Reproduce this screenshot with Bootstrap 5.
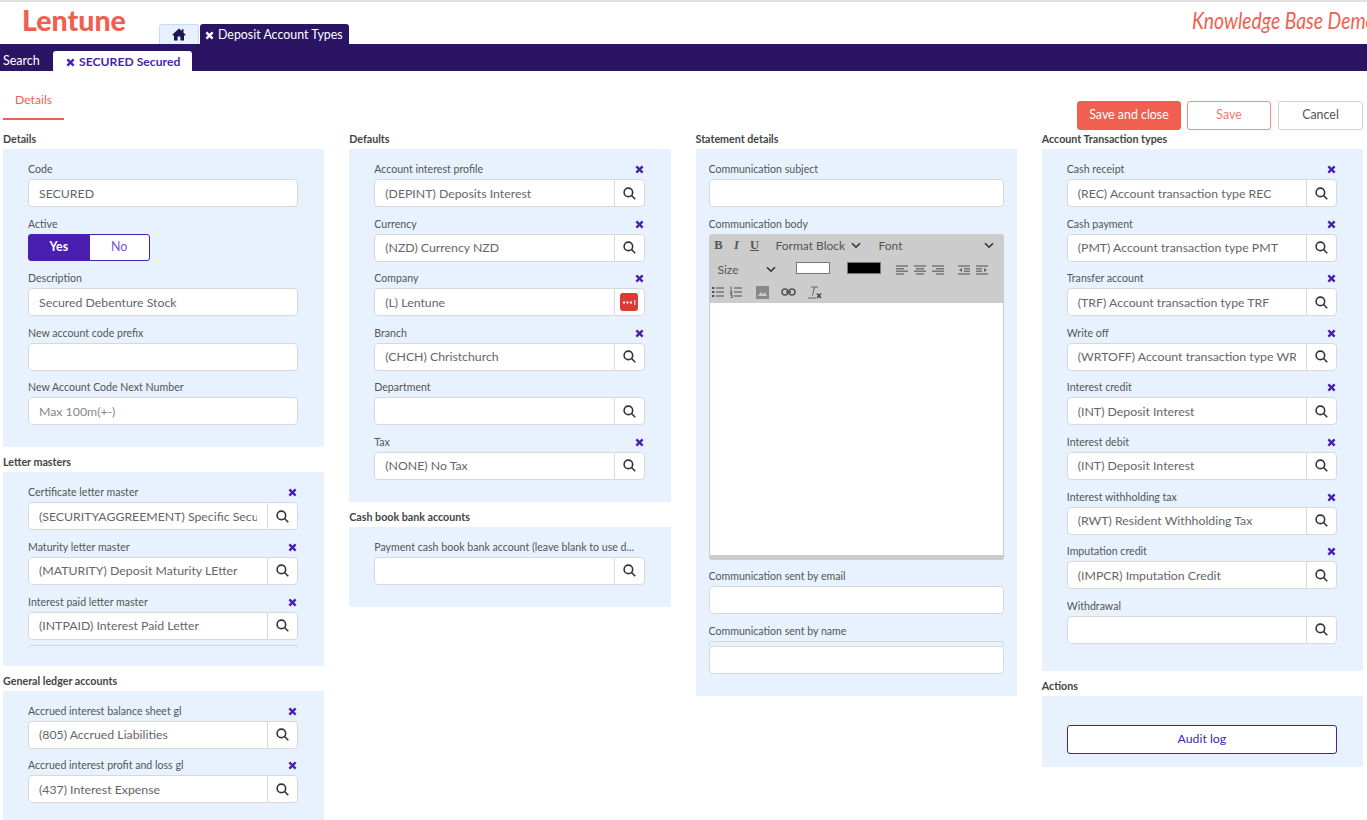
<!DOCTYPE html>
<html lang="en">
<head>
    <meta charset="utf-8">
    <title>Deposit Account Types</title>
    <link href="https://cdn.jsdelivr.net/npm/bootstrap@5.3.3/dist/css/bootstrap.min.css" rel="stylesheet">
    <script src="https://cdn.jsdelivr.net/npm/bootstrap@5.3.3/dist/js/bootstrap.bundle.min.js"></script>
    <style>
        html, body { height: 820px; overflow: hidden; }
        body { font-family: "Lato", "Noto Sans", sans-serif; font-size: 12.3px; color: #555; background: #fff; }

        /* header */
        .top-head { height: 44px; border-top: 2px solid #e2e2e2; position: relative; overflow: hidden; }
        .logo-text { font-family: "Lato", sans-serif; font-weight: 900; font-size: 28.5px; line-height: 1; color: #f15f50; margin-left: 22px; margin-top: 4px; width: 137px; }
        .head-tab { height: 20px; margin-top: 22px; border-radius: 3px 3px 0 0; }
        .home-tab { width: 40px; background: #e6f1fd; border: 1px solid #c4dcf7; border-bottom: 0; }
        .dep-tab { width: 149px; margin-left: 1px; background: #2b1463; color: #fff; padding-left: 5px; font-size: 12.4px; line-height: 21px; white-space: nowrap; }
        .dep-tab .fld-x { margin-right: 4px; }
        .kb-text { position: absolute; left: 1192px; top: 1px; white-space: nowrap; font-family: "Lato", sans-serif; font-style: italic; font-size: 23px; line-height: 34px; color: #f15f50; transform: scaleX(.84); transform-origin: left center; }
        .sub-bar { height: 27px; background: #2b1463; color: #fff; }
        .sub-search { padding-left: 3px; width: 53px; font-size: 12.5px; line-height: 34px; }
        .sub-tab { width: 139px; height: 20px; margin-top: 7px; background: #fff; color: #4a1fb0; font-weight: 700; border-radius: 3px 3px 0 0; padding-left: 13px; line-height: 21px; font-size: 12.2px; white-space: nowrap; }

        /* details tab + actions */
        .tab-row { height: 61px; padding: 0 4px 0 3px; }
        .det-tab { width: 61px; height: 35px; margin-top: 14px; padding-left: 12px; line-height: 30px; color: #f15f50; font-size: 12.2px; border-bottom: 2px solid #f15f50; }
        .act-btn { height: 29px; padding: 0; font-size: 12.4px; border-radius: 3px; margin-top: 30px; }
        .btn-coral { width: 104px; background: #f15f50; border: 1px solid #f15f50; color: #fff; }
        .btn-coral-line { width: 84px; margin-left: 6px; background: #fff; border: 1px solid #f78d82; color: #f57a6d; }
        .btn-plain-line { width: 85px; margin-left: 7px; background: #fff; border: 1px solid #d5d5d5; color: #555; }

        /* columns */
        .form-cols { display: grid; grid-template-columns: repeat(4, minmax(0, 1fr)); column-gap: 25px; padding: 0 4px 0 3px; align-items: start; }
        .sec-title { font-size: 10.7px; font-weight: 700; color: #444; line-height: 14px; margin: 0; height: 17px; white-space: nowrap; }
        .sec-panel { background: #e7f2fe; padding: 12px 26px 13px 25px; margin-bottom: 8px; }
        .pad-b18 { padding-bottom: 18px; }
        .pad-b22 { padding-bottom: 22px; }
        .pad-b27 { padding-bottom: 27px; }
        .pad-x13 { padding-left: 13px; padding-right: 13px; }
        .pad-t29 { padding-top: 29px; }
        .fld { margin-bottom: 8.6px; }
        .fld:last-child { margin-bottom: 0; }
        .fld-label { font-size: 10.6px; line-height: 16px; height: 18px; color: #555; white-space: nowrap; overflow: hidden; }
        .fld-label.d-flex { align-items: flex-start !important; }
        .fld-label .fld-x { margin-top: 4px; }
        .fld-x { width: 9px; height: 9px; margin-right: 1px; fill: none; stroke: #4a1fb0; stroke-width: 2.6; }
        .fld-x-white { stroke: #fff; }
        .fld .form-control { height: 28px; min-height: 0; padding: 0 10px; font-size: 12.3px; color: #666; border: 1px solid #d8d8d8; border-radius: 4px; box-shadow: none; background: #fff; }
        .fld .input-group .form-control { border-radius: 4px 0 0 4px; }
        .fld .form-control::placeholder { color: #888; }
        .srch-btn { width: 31px; padding: 0; background: #fff; border: 1px solid #d8d8d8; border-radius: 0 4px 4px 0; display: flex; align-items: center; justify-content: center; }
        .srch-ico { width: 13px; height: 13px; fill: none; stroke: #333; stroke-width: 1.7; }
        .dots-ico { width: 18px; height: 18px; background: #dc3b35; border-radius: 3px; color: #fff; display: flex; align-items: center; justify-content: center; }
        .tog-wrap { width: 122px; height: 27px; margin-bottom: 1px; }
        .tog-wrap .btn { width: 50%; padding: 0; font-size: 12.4px; border: 1px solid #4a1fb0; border-radius: 3px; font-weight: 700; }
        .tog-on { background: #4a1fb0; color: #fff; }
        .tog-wrap .tog-off { background: #fff; color: #7a4fd6; font-weight: 400; }
        .clip-line { height: 3px; margin-top: 5px; border: 1px solid #d8d8d8; border-bottom: 0; border-radius: 3px 3px 0 0; }
        .clip-line-inp { height: 5px; border: 1px solid #d8d8d8; border-bottom: 0; border-radius: 3px 3px 0 0; }

        /* editor */
        .ed-box { height: 326px; background: #ccc; border-radius: 3px; padding: 0 1px 5px; display: flex; flex-direction: column; margin-bottom: 8px; }
        .ed-bar { height: 69px; flex: none; color: #555; font-size: 12px; }
        .ed-row { height: 24px; display: flex; align-items: center; white-space: nowrap; }
        .ed-row2 { padding-left: 8px; }
        .ed-row3 { height: 21px; padding-left: 2px; }
        .ed-body { flex: 1; background: #fff; }
        .ed-fmt { font-family: "Liberation Serif", serif; font-size: 12.5px; width: 18px; text-align: center; color: #555; }
        .ed-sel { display: flex; justify-content: space-between; align-items: center; }
        .ed-sel-fmt { width: 85px; margin-left: 12px; }
        .ed-sel-font { width: 115px; margin-left: 18px; }
        .ed-sel-size { width: 58px; }
        .ed-chev { width: 10px; height: 7px; fill: none; stroke: #333; stroke-width: 1.6; }
        .ed-swatch { width: 34px; height: 12px; border: 1px solid #777; flex: none; margin-top: -4px; }
        .ed-ico { width: 12px; height: 12px; flex: none; fill: none; stroke: #777; stroke-width: 1.4; }
        .ed-img { width: 13px; height: 13px; flex: none; }
        .gap-6 { margin-left: 6px; }
        .gap-12 { margin-left: 12px; }
        .gap-14 { margin-left: 14px; }
        .gap-15 { margin-left: 15px; }
        .gap-17 { margin-left: 17px; }
        .gap-20 { margin-left: 20px; }
        .audit-btn { width: 100%; height: 29px; padding: 0; font-size: 12.3px; color: #4a1fb0; background: #fff; border: 1px solid #4a1fb0; border-radius: 3px; }
    </style>
</head>
<body>

    <svg width="0" height="0" class="position-absolute">
        <symbol id="i-x" viewBox="0 0 10 10"><path d="M1.5 1.5l7 7M8.5 1.5l-7 7"/></symbol>
        <symbol id="i-s" viewBox="0 0 14 14"><circle cx="5.8" cy="5.8" r="4.6"/><path d="M9.2 9.2l4 4"/></symbol>
        <symbol id="i-ch" viewBox="0 0 10 7"><path d="M1 1.2l4 4 4-4"/></symbol>
        <symbol id="i-al" viewBox="0 0 12 12"><path d="M0 2h12M0 4.700h8M0 7.300h12M0 10h8"/></symbol>
        <symbol id="i-ac" viewBox="0 0 12 12"><path d="M0 2h12M2 4.700h8M0 7.300h12M2 10h8"/></symbol>
        <symbol id="i-ar" viewBox="0 0 12 12"><path d="M0 2h12M4 4.700h8M0 7.300h12M4 10h8"/></symbol>
    </svg>

    <!-- header -->
    <div class="top-head d-flex">
        <div class="logo-text">Lentune</div>
        <div class="head-tab home-tab d-flex align-items-center justify-content-center">
            <svg width="14" height="13" viewBox="0 0 14 13"><path fill="#1d1450" d="M7 0.500L0.300 6.700l1 1L2 7.100V12.600h3.600V8.500h2.800v4.100H12V7.100l.7.6 1-1L11.500 4.700V1.200H9.800v1.900z"/></svg>
        </div>
        <div class="head-tab dep-tab">
            <svg class="fld-x fld-x-white"><use href="#i-x"/></svg>Deposit Account Types
        </div>
        <div class="kb-text">Knowledge Base Demo</div>
    </div>
    <div class="sub-bar d-flex">
        <div class="sub-search">Search</div>
        <div class="sub-tab">
            <svg class="fld-x"><use href="#i-x"/></svg> SECURED Secured
        </div>
    </div>

    <div class="tab-row d-flex">
        <div class="det-tab">Details</div>
        <div class="ms-auto d-flex align-items-start">
            <button class="btn act-btn btn-coral">Save and close</button>
            <button class="btn act-btn btn-coral-line">Save</button>
            <button class="btn act-btn btn-plain-line">Cancel</button>
        </div>
    </div>

    <div class="form-cols">

        <!-- column 1 -->
        <div>
            <h6 class="sec-title">Details</h6>
            <div class="sec-panel pad-b22">
                <div class="fld">
                    <div class="fld-label">Code</div>
                    <input class="form-control" value="SECURED">
                </div>
                <div class="fld">
                    <div class="fld-label">Active</div>
                    <div class="btn-group tog-wrap">
                        <button class="btn tog-on">Yes</button>
                        <button class="btn tog-off">No</button>
                    </div>
                </div>
                <div class="fld">
                    <div class="fld-label">Description</div>
                    <input class="form-control" value="Secured Debenture Stock">
                </div>
                <div class="fld">
                    <div class="fld-label">New account code prefix</div>
                    <input class="form-control">
                </div>
                <div class="fld">
                    <div class="fld-label">New Account Code Next Number</div>
                    <input class="form-control" placeholder="Max 100m(+-)">
                </div>
            </div>

            <h6 class="sec-title">Letter masters</h6>
            <div class="sec-panel pad-b18">
                <div class="fld">
                    <div class="fld-label d-flex justify-content-between">Certificate letter master<svg class="fld-x"><use href="#i-x"/></svg></div>
                    <div class="input-group"><input class="form-control" value="(SECURITYAGGREEMENT) Specific Security Agreement"><button class="srch-btn"><svg class="srch-ico"><use href="#i-s"/></svg></button></div>
                </div>
                <div class="fld">
                    <div class="fld-label d-flex justify-content-between">Maturity letter master<svg class="fld-x"><use href="#i-x"/></svg></div>
                    <div class="input-group"><input class="form-control" value="(MATURITY) Deposit Maturity LEtter"><button class="srch-btn"><svg class="srch-ico"><use href="#i-s"/></svg></button></div>
                </div>
                <div class="fld">
                    <div class="fld-label d-flex justify-content-between">Interest paid letter master<svg class="fld-x"><use href="#i-x"/></svg></div>
                    <div class="input-group"><input class="form-control" value="(INTPAID) Interest Paid Letter"><button class="srch-btn"><svg class="srch-ico"><use href="#i-s"/></svg></button></div>
                    <div class="clip-line"></div>
                </div>
            </div>

            <h6 class="sec-title">General ledger accounts</h6>
            <div class="sec-panel pad-b22">
                <div class="fld">
                    <div class="fld-label d-flex justify-content-between">Accrued interest balance sheet gl<svg class="fld-x"><use href="#i-x"/></svg></div>
                    <div class="input-group"><input class="form-control" value="(805) Accrued Liabilities"><button class="srch-btn"><svg class="srch-ico"><use href="#i-s"/></svg></button></div>
                </div>
                <div class="fld">
                    <div class="fld-label d-flex justify-content-between">Accrued interest profit and loss gl<svg class="fld-x"><use href="#i-x"/></svg></div>
                    <div class="input-group"><input class="form-control" value="(437) Interest Expense"><button class="srch-btn"><svg class="srch-ico"><use href="#i-s"/></svg></button></div>
                </div>
            </div>
        </div>

        <!-- column 2 -->
        <div>
            <h6 class="sec-title">Defaults</h6>
            <div class="sec-panel pad-b22">
                <div class="fld">
                    <div class="fld-label d-flex justify-content-between">Account interest profile<svg class="fld-x"><use href="#i-x"/></svg></div>
                    <div class="input-group"><input class="form-control" value="(DEPINT) Deposits Interest"><button class="srch-btn"><svg class="srch-ico"><use href="#i-s"/></svg></button></div>
                </div>
                <div class="fld">
                    <div class="fld-label d-flex justify-content-between">Currency<svg class="fld-x"><use href="#i-x"/></svg></div>
                    <div class="input-group"><input class="form-control" value="(NZD) Currency NZD"><button class="srch-btn"><svg class="srch-ico"><use href="#i-s"/></svg></button></div>
                </div>
                <div class="fld">
                    <div class="fld-label d-flex justify-content-between">Company<svg class="fld-x"><use href="#i-x"/></svg></div>
                    <div class="input-group"><input class="form-control" value="(L) Lentune"><button class="srch-btn"><span class="dots-ico"><svg width="13" height="5" viewBox="0 0 13 5"><path fill="#fff" d="M0 1.500h2v2H0zM3.500 1.500h2v2h-2zM7 1.500h2v2H7zM11.300 0h1v5h-1z"/></svg></span></button></div>
                </div>
                <div class="fld">
                    <div class="fld-label d-flex justify-content-between">Branch<svg class="fld-x"><use href="#i-x"/></svg></div>
                    <div class="input-group"><input class="form-control" value="(CHCH) Christchurch"><button class="srch-btn"><svg class="srch-ico"><use href="#i-s"/></svg></button></div>
                </div>
                <div class="fld">
                    <div class="fld-label">Department</div>
                    <div class="input-group"><input class="form-control"><button class="srch-btn"><svg class="srch-ico"><use href="#i-s"/></svg></button></div>
                </div>
                <div class="fld">
                    <div class="fld-label d-flex justify-content-between">Tax<svg class="fld-x"><use href="#i-x"/></svg></div>
                    <div class="input-group"><input class="form-control" value="(NONE) No Tax"><button class="srch-btn"><svg class="srch-ico"><use href="#i-s"/></svg></button></div>
                </div>
            </div>

            <h6 class="sec-title">Cash book bank accounts</h6>
            <div class="sec-panel pad-b22">
                <div class="fld">
                    <div class="fld-label">Payment cash book bank account (leave blank to use d...</div>
                    <div class="input-group"><input class="form-control"><button class="srch-btn"><svg class="srch-ico"><use href="#i-s"/></svg></button></div>
                </div>
            </div>
        </div>

        <!-- column 3 -->
        <div>
            <h6 class="sec-title">Statement details</h6>
            <div class="sec-panel pad-x13 pad-b22">
                <div class="fld">
                    <div class="fld-label">Communication subject</div>
                    <input class="form-control">
                </div>
                <div class="fld">
                    <div class="fld-label">Communication body</div>
                    <div class="ed-box">
                        <div class="ed-bar">
                            <div class="ed-row">
                                <span class="ed-fmt fw-bold">B</span>
                                <span class="ed-fmt fst-italic fw-bold">I</span>
                                <span class="ed-fmt fw-bold text-decoration-underline">U</span>
                                <span class="ed-sel ed-sel-fmt">Format Block<svg class="ed-chev"><use href="#i-ch"/></svg></span>
                                <span class="ed-sel ed-sel-font">Font<svg class="ed-chev"><use href="#i-ch"/></svg></span>
                            </div>
                            <div class="ed-row ed-row2">
                                <span class="ed-sel ed-sel-size">Size<svg class="ed-chev"><use href="#i-ch"/></svg></span>
                                <span class="ed-swatch bg-white gap-20"></span>
                                <span class="ed-swatch bg-black gap-17"></span>
                                <svg class="ed-ico gap-15"><use href="#i-al"/></svg>
                                <svg class="ed-ico gap-6"><use href="#i-ac"/></svg>
                                <svg class="ed-ico gap-6"><use href="#i-ar"/></svg>
                                <svg class="ed-ico gap-14" viewBox="0 0 12 12"><path d="M0 2h12M6 4.700h6M6 7.300h6M0 10h12"/><path fill="#666" stroke="none" d="M4 4v4L1 6z"/></svg>
                                <svg class="ed-ico gap-6" viewBox="0 0 12 12"><path d="M0 2h12M0 4.700h6M0 7.300h6M0 10h12"/><path fill="#666" stroke="none" d="M8 4v4l3-2z"/></svg>
                            </div>
                            <div class="ed-row ed-row3">
                                <svg class="ed-ico" viewBox="0 0 12 12"><path d="M4 2h8M4 6h8M4 10h8"/><path stroke="none" fill="#555" d="M0 1h2.400v2H0zM0 5h2.400v2H0zM0 9h2.400v2H0z"/></svg>
                                <svg class="ed-ico gap-6" viewBox="0 0 12 12"><path d="M4 2h8M4 6h8M4 10h8"/><path stroke="#555" stroke-width="1" d="M1 .5v3M.2 5h2L.2 7.500h2M.2 9h2v3H.2"/></svg>
                                <svg class="ed-img gap-14" viewBox="0 0 13 13"><path fill="#888" d="M0 0h13v13H0z"/><path fill="#ccc" d="M2 10l3-4 2 2.500L9 6l2 4z"/></svg>
                                <svg class="gap-12" width="15" height="8" viewBox="0 0 15 8" fill="none" stroke="#555" stroke-width="1.600"><rect x="1" y="1" width="6" height="6" rx="3"/><rect x="8" y="1" width="6" height="6" rx="3"/><path d="M5 4h5"/></svg>
                                <svg class="gap-12" width="14" height="13" viewBox="0 0 14 13" fill="none" stroke="#666"><path d="M3 1h7M6.500 1L4.500 9.500M0 12h8"/><path stroke="#444" stroke-width="1.500" d="M9 7.500l4 4.500M13 7.500L9 12"/></svg>
                            </div>
                        </div>
                        <div class="ed-body"></div>
                    </div>
                </div>
                <div class="fld">
                    <div class="fld-label">Communication sent by email</div>
                    <input class="form-control">
                </div>
                <div class="fld">
                    <div class="fld-label">Communication sent by name</div>
                    <div class="clip-line-inp"></div>
                    <input class="form-control">
                </div>
            </div>
        </div>

        <!-- column 4 -->
        <div>
            <h6 class="sec-title">Account Transaction types</h6>
            <div class="sec-panel pad-b27">
                <div class="fld">
                    <div class="fld-label d-flex justify-content-between">Cash receipt<svg class="fld-x"><use href="#i-x"/></svg></div>
                    <div class="input-group"><input class="form-control" value="(REC) Account transaction type REC"><button class="srch-btn"><svg class="srch-ico"><use href="#i-s"/></svg></button></div>
                </div>
                <div class="fld">
                    <div class="fld-label d-flex justify-content-between">Cash payment<svg class="fld-x"><use href="#i-x"/></svg></div>
                    <div class="input-group"><input class="form-control" value="(PMT) Account transaction type PMT"><button class="srch-btn"><svg class="srch-ico"><use href="#i-s"/></svg></button></div>
                </div>
                <div class="fld">
                    <div class="fld-label d-flex justify-content-between">Transfer account<svg class="fld-x"><use href="#i-x"/></svg></div>
                    <div class="input-group"><input class="form-control" value="(TRF) Account transaction type TRF"><button class="srch-btn"><svg class="srch-ico"><use href="#i-s"/></svg></button></div>
                </div>
                <div class="fld">
                    <div class="fld-label d-flex justify-content-between">Write off<svg class="fld-x"><use href="#i-x"/></svg></div>
                    <div class="input-group"><input class="form-control" value="(WRTOFF) Account transaction type WRTOFF"><button class="srch-btn"><svg class="srch-ico"><use href="#i-s"/></svg></button></div>
                </div>
                <div class="fld">
                    <div class="fld-label d-flex justify-content-between">Interest credit<svg class="fld-x"><use href="#i-x"/></svg></div>
                    <div class="input-group"><input class="form-control" value="(INT) Deposit Interest"><button class="srch-btn"><svg class="srch-ico"><use href="#i-s"/></svg></button></div>
                </div>
                <div class="fld">
                    <div class="fld-label d-flex justify-content-between">Interest debit<svg class="fld-x"><use href="#i-x"/></svg></div>
                    <div class="input-group"><input class="form-control" value="(INT) Deposit Interest"><button class="srch-btn"><svg class="srch-ico"><use href="#i-s"/></svg></button></div>
                </div>
                <div class="fld">
                    <div class="fld-label d-flex justify-content-between">Interest withholding tax<svg class="fld-x"><use href="#i-x"/></svg></div>
                    <div class="input-group"><input class="form-control" value="(RWT) Resident Withholding Tax"><button class="srch-btn"><svg class="srch-ico"><use href="#i-s"/></svg></button></div>
                </div>
                <div class="fld">
                    <div class="fld-label d-flex justify-content-between">Imputation credit<svg class="fld-x"><use href="#i-x"/></svg></div>
                    <div class="input-group"><input class="form-control" value="(IMPCR) Imputation Credit"><button class="srch-btn"><svg class="srch-ico"><use href="#i-s"/></svg></button></div>
                </div>
                <div class="fld">
                    <div class="fld-label">Withdrawal</div>
                    <div class="input-group"><input class="form-control"><button class="srch-btn"><svg class="srch-ico"><use href="#i-s"/></svg></button></div>
                </div>
            </div>

            <h6 class="sec-title">Actions</h6>
            <div class="sec-panel pad-t29">
                <button class="btn audit-btn">Audit log</button>
            </div>
        </div>
    </div>

</body>
</html>
